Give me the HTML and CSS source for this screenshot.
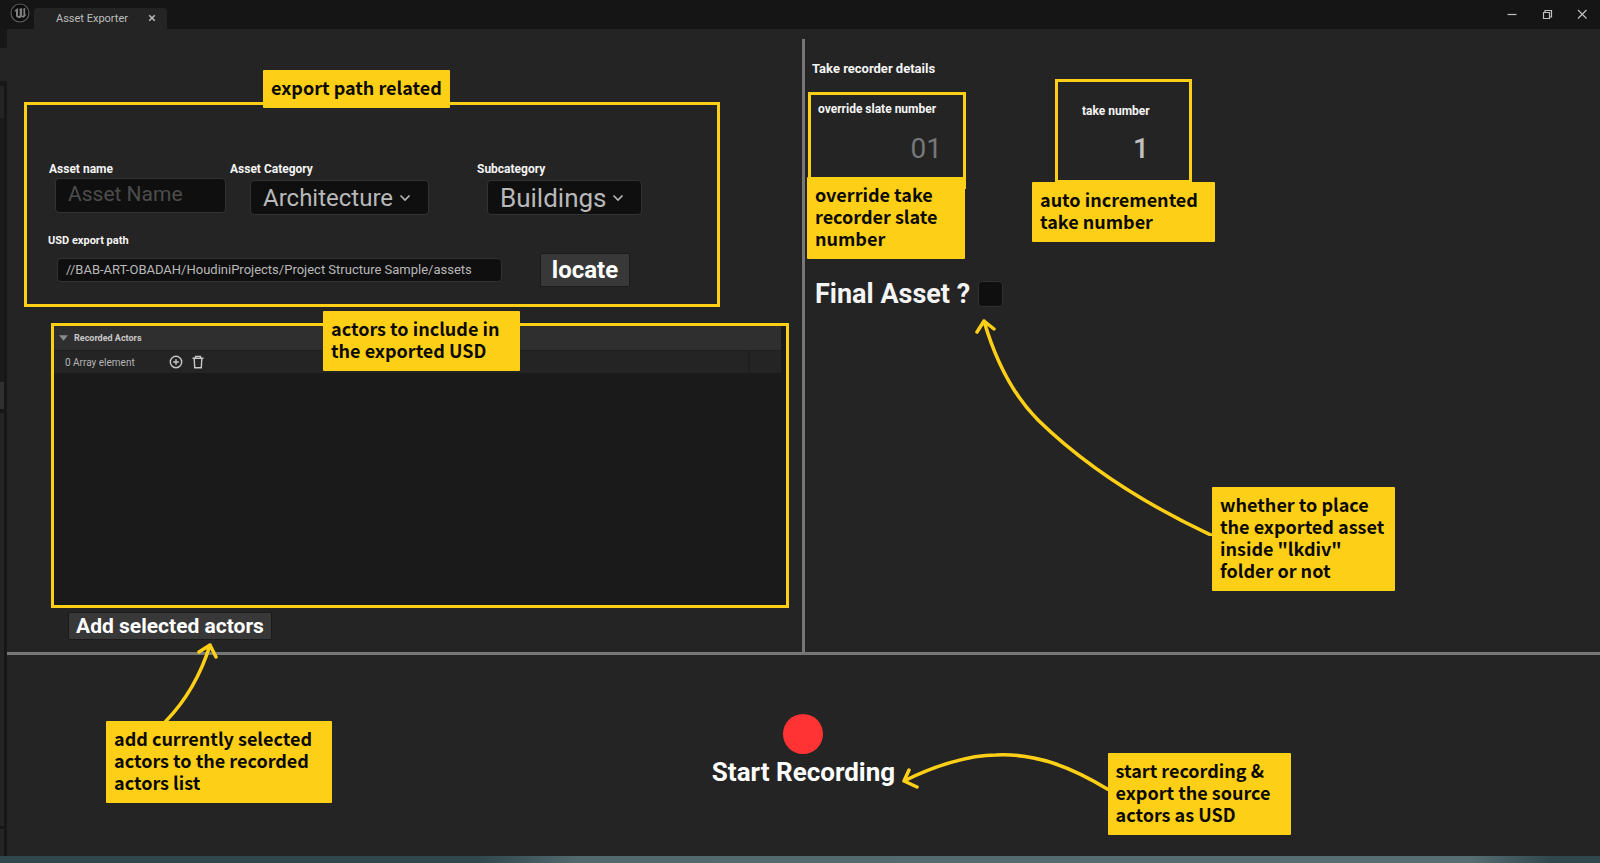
FILE: index.html
```html
<!DOCTYPE html>
<html lang="en">
<head>
<meta charset="utf-8">
<title>Asset Exporter</title>
<link rel="stylesheet" href="styles.css">
</head>
<body>
<div class="window">
  <header class="titlebar">
    <svg class="logo" viewBox="0 0 20 20" aria-hidden="true">
      <circle cx="10" cy="10" r="9" fill="#0c0c0c" stroke="#5c5c5c" stroke-width="1.2"/>
      <path d="M4.200 8.800C5 6.900 6.600 5.500 8.600 5.100C8 5.800 8 6.200 8 7v5.200c0 .9 .9 1.200 1.700 .5V7.300c0-.8-.5-.8-.9-.7c.9-.9 2-1.500 3.300-1.700v7.400c0 .7 .8 .9 1.300 .3V7c0-.7-.2-.9-.6-1.100c1-.1 2-.6 2.700-1.300c-.3 .6-.3 1-.3 1.600v5.600c.4 .1 .8-.2 1.200-.7c-.6 1.900-1.700 3.100-3.300 3.700l-1.400-1.100l-1.400 1.300C7.500 15.200 6 14.500 6 12.600V8.500c-.4-.5-1-.4-1.800 .3z" fill="#808080"/>
    </svg>
    <div class="tab">
      <span>Asset Exporter</span>
      <button class="tab-close" aria-label="Close tab"><svg viewBox="0 0 8 8"><path d="M1.200 1.200L6.800 6.800M6.800 1.200L1.200 6.800"/></svg></button>
    </div>
    <div class="window-controls">
      <button aria-label="Minimize"><svg viewBox="0 0 12 12"><path d="M1.500 6.500h9"/></svg></button>
      <button aria-label="Restore"><svg viewBox="0 0 12 12"><path d="M2.500 4.500h6v6h-6zM4 4V2.500h6.500V9H9"/></svg></button>
      <button aria-label="Close"><svg viewBox="0 0 12 12"><path d="M2 2l8.500 8.500M10.500 2L2 10.500"/></svg></button>
    </div>
  </header>

  <div class="body">
    <aside class="edge" aria-hidden="true">
      <i class="edge-dark"></i><i class="edge-gap"></i><i class="edge-tab"></i><i class="edge-list"></i><i class="edge-bar"></i><i class="edge-panel"></i><i class="edge-foot"></i>
    </aside>
    <main class="workspace">
      <div class="panes">
        <section class="pane-left">
          <form class="frame export">
            <p class="note note-export">export path related</p>
            <div class="fields">
              <div class="field field-name">
                <label for="name">Asset name</label>
                <input id="name" class="box" type="text" placeholder="Asset Name">
              </div>
              <div class="field field-category">
                <label for="category">Asset Category</label>
                <div class="picker">
                  <select id="category" class="box"><option>Architecture</option></select>
                  <svg viewBox="0 0 12 8"><path d="M1.500 1.500L6 6l4.500-4.500"/></svg>
                </div>
              </div>
              <div class="field field-sub">
                <label for="subcategory">Subcategory</label>
                <div class="picker">
                  <select id="subcategory" class="box"><option>Buildings</option></select>
                  <svg viewBox="0 0 12 8"><path d="M1.500 1.500L6 6l4.500-4.500"/></svg>
                </div>
              </div>
            </div>
            <label class="path-label" for="path">USD export path</label>
            <div class="path-row">
              <input id="path" class="box path" type="text" value="//BAB-ART-OBADAH/HoudiniProjects/Project Structure Sample/assets">
              <button type="button" class="btn locate">locate</button>
            </div>
          </form>

          <section class="frame actors">
            <p class="note note-actors">actors to include in<br>the exported USD</p>
            <h2 class="actors-head">
              <svg viewBox="0 0 10 6"><path d="M0 0h10L5 6z"/></svg>Recorded Actors
            </h2>
            <div class="actors-row">
              <span class="count">0 Array element</span>
              <button class="icon" aria-label="Add element"><svg viewBox="0 0 14 14"><circle cx="7" cy="7" r="5.700"/><path d="M7 4.200v5.600M4.200 7h5.600"/></svg></button>
              <button class="icon" aria-label="Remove all elements"><svg viewBox="0 0 14 14"><path d="M1.500 3.200h11M4.500 3V1.400h5V3M3.200 3.500l.5 9.200h6.600l.5-9.200"/></svg></button>
              <span class="cell-end"></span>
            </div>
          </section>
          <button class="btn add">Add selected actors</button>
        </section>

        <section class="pane-right">
          <h2 class="details">Take recorder details</h2>
          <div class="takes">
            <div class="frame take slate">
              <label for="slate">override slate number</label>
              <input id="slate" type="text" placeholder="01">
              <p class="note note-slate">override take<br>recorder slate<br>number</p>
            </div>
            <div class="frame take number">
              <label for="take">take number</label>
              <input id="take" type="text" value="1">
              <p class="note note-take">auto incremented<br>take number</p>
            </div>
          </div>
          <div class="final">
            <label for="final">Final Asset ?</label>
            <input id="final" type="checkbox">
            <svg class="arrow arrow-final" viewBox="0 0 240 220" aria-hidden="true"><path d="M9 5C19 39 35 76 63 104C105 145 165 186 238 220M2 16L9 5L19 13"/></svg>
            <p class="note note-final">whether to place<br>the exported asset<br>inside "lkdiv"<br>folder or not</p>
          </div>
        </section>
      </div>

      <section class="record">
        <svg class="arrow arrow-add" viewBox="0 0 60 80" aria-hidden="true"><path d="M6 79Q36 48 50 3M39 10L50 3L56 15"/></svg>
        <p class="note note-add">add currently selected<br>actors to the recorded<br>actors list</p>
        <button class="start"><span class="dot"></span>Start Recording</button>
        <svg class="arrow arrow-start" viewBox="0 0 210 40" aria-hidden="true"><path d="M4 30C34 15 69 4 96 4C137 2 173 17 209 39M9 19L4 30L17 36"/></svg>
        <p class="note note-start">start recording &amp;<br>export the source<br>actors as USD</p>
      </section>
    </main>
  </div>
  <div class="desktop-strip"></div>
</div>
</body>
</html>
```

FILE: styles.css
```css
* { box-sizing: border-box; }
body { margin: 0; background: #242424; color: #f4f4f4; font-family: Roboto, "Liberation Sans", sans-serif; }
h2, p { margin: 0; }
button, input, select { font: inherit; color: inherit; margin: 0; border-radius: 4px; }
button { padding: 0; border: 0; background: none; }
svg { display: block; fill: none; }

.window { display: flex; flex-direction: column; min-height: 100vh; }

.titlebar { display: flex; height: 29px; background: #151515; }
.logo { width: 20px; height: 20px; margin: 3px 4px 0 10px; }
.tab { display: flex; align-items: center; justify-content: space-between; width: 133px; margin-top: 8px; padding: 0 11px 1px 22px; border-radius: 4px 4px 0 0; background: #242424; color: #bdbdbd; font-size: 11px; }
.tab-close svg { width: 8px; height: 8px; stroke: #b8b8b8; stroke-width: 1.6; }
.window-controls { display: flex; gap: 23px; align-items: center; margin-left: auto; padding: 0 12px 2px 0; }
.window-controls svg { width: 12px; height: 12px; stroke: #c0c0c0; stroke-width: 1.2; }

.body { display: flex; flex: 1; }
.edge { display: flex; flex-direction: column; width: 7px; border-right: 3px solid #171717; background: #171717; }
.edge i { display: block; flex: none; }
.edge-dark { height: 19px; }
.edge-gap { height: 33px; margin-right: -3px; background: #242424; }
.edge-tab { height: 32px; margin-top: 5px; background: #242424; }
.edge-list { height: 264px; background: #1a1a1a; }
.edge-bar { height: 27px; margin-bottom: 4px; background: #303030; }
.edge .edge-panel { flex: 1; background: #242424; }
.edge-foot { height: 27px; margin-top: 3px; background: #242424; }

.workspace { display: flex; flex: 1; flex-direction: column; }
.panes { display: grid; grid-template-columns: 798fr 795fr; padding-top: 10px; border-bottom: 3px solid #777; }
.pane-left { padding: 63px 0 12px 17px; border-right: 3px solid #777; }

.frame { position: relative; border: 3px solid #fdd017; }
.note { position: absolute; z-index: 2; padding: 6px 8px 10px; border-radius: 1px; background: #fdd017; color: #0c0a00; font: bold 18px/22px "Noto Sans CJK SC", "Noto Sans", sans-serif; white-space: nowrap; }
.arrow { position: absolute; z-index: 1; stroke: #fdd017; stroke-width: 3.5; stroke-linecap: round; stroke-linejoin: round; }

label { font-size: 12px; line-height: 14px; font-weight: bold; }
.box { border: 1px solid #323232; background: #0f0f0f; color: #b8b8b8; }

.export { margin-right: 82px; padding: 57px 0 17px 21px; }
.fields { display: grid; grid-template-columns: 181px 247px 1fr; padding-left: 1px; }
.field { display: flex; flex-direction: column; align-items: flex-start; }
.field .box { height: 35px; padding: 0 12px; }
.field-name .box { width: 171px; margin: 2px 0 0 6px; padding-bottom: 4px; font-size: 21px; }
::placeholder { color: #4c4c4c; opacity: 1; }
.picker { position: relative; margin-top: 4px; }
.picker select { appearance: none; width: 100%; font-size: 24px; line-height: 30px; }
.picker svg { position: absolute; top: 14px; right: 18px; width: 12px; height: 8px; stroke: #b8b8b8; stroke-width: 1.6; }
.field-category .picker { width: 179px; margin-left: 20px; }
.field-sub .picker { width: 155px; margin-left: 10px; }
.field-sub .picker select { font-size: 26px; }
.path-label { display: block; margin-top: 19px; font-size: 11px; }
.path-row { display: flex; gap: 38px; align-items: center; margin: 5px 0 0 9px; }
.path { width: 445px; height: 24px; padding: 0 8px 1px; font-size: 13px; }
.btn { border: 1px solid #1b1b1b; border-radius: 2px; background: #383838; color: #fff; font-weight: bold; }
.locate { width: 90px; height: 34px; font-size: 24px; line-height: 30px; }
.note-export { top: -35px; left: 236px; }

.actors { height: 285px; margin: 16px 13px 0 27px; background: #1a1a1a; }
.actors-head { display: flex; gap: 6px; align-items: center; height: 24px; margin-right: 5px; padding-left: 5px; background: #2f2f2f; color: #c8c8c8; font-size: 9px; }
.actors-head svg { width: 9px; height: 6px; fill: #8a8a8a; }
.actors-row { display: flex; align-items: center; height: 23px; margin-right: 5px; padding-left: 11px; border-top: 1px solid #1e1e1e; background: #242424; color: #b4b4b4; font-size: 10px; }
.count { width: 104px; }
.icon { margin-right: 8px; }
.icon svg { width: 14px; height: 14px; stroke: #c8c8c8; stroke-width: 1.4; }
.cell-end { align-self: stretch; width: 33px; margin-left: auto; border-left: 2px solid #1e1e1e; }
.note-actors { top: -15px; left: 269px; width: 197px; }
.add { display: block; width: 204px; height: 28px; margin: 4px 0 0 44px; font-size: 21px; line-height: 24px; }

.pane-right { padding: 22px 0 0 7px; }
.details { font-size: 13px; line-height: 16px; }
.takes { display: flex; gap: 89px; align-items: flex-start; margin: 2px 0 0 -4px; }
.take { display: flex; flex-direction: column; height: 104px; }
.take input { width: 100%; padding: 0; border: 0; background: none; color: #c0c0c0; font-size: 28px; line-height: 32px; text-align: right; }
.take.slate { width: 158px; height: 97px; margin-top: 13px; padding: 7px 21px 0 7px; }
.slate input { margin-top: 17px; }
.slate ::placeholder { color: #777; }
.number { width: 137px; padding: 22px 40px 0 24px; white-space: nowrap; }
.number input { margin-top: 15px; font-weight: 500; }
.note-slate { top: 82px; left: -4px; width: 158px; }
.note-take { top: 100px; left: -26px; width: 183px; }
.final { position: relative; display: flex; gap: 8px; align-items: center; margin: 88px 0 0 3px; }
.final label { font-size: 27px; line-height: 34px; }
.final input { appearance: none; width: 25px; height: 26px; border: 1px solid #303030; background: #0f0f0f; }
.arrow-final { top: 39px; left: 160px; width: 240px; height: 220px; }
.note-final { top: 210px; left: 397px; width: 183px; }

.record { position: relative; display: flex; flex: 1; justify-content: center; align-items: flex-start; padding-top: 59px; }
.start { display: flex; flex-direction: column; align-items: center; gap: 2px; color: #fff; font-size: 26px; line-height: 32px; font-weight: bold; }
.dot { width: 40px; height: 40px; border-radius: 50%; background: #ff3333; }
.arrow-add { top: -13px; left: 153px; width: 60px; height: 80px; }
.note-add { top: 66px; left: 99px; width: 226px; }
.arrow-start { top: 96px; left: calc(50% + 96px); width: 210px; height: 40px; }
.note-start { top: 98px; left: calc(50% + 304px); width: 183px; }

.desktop-strip { height: 7px; background: linear-gradient(90deg, #2f474d, #2f474d 30%, #526a6e 36%, #566e72 92%, #2f474d 97%); }
```
